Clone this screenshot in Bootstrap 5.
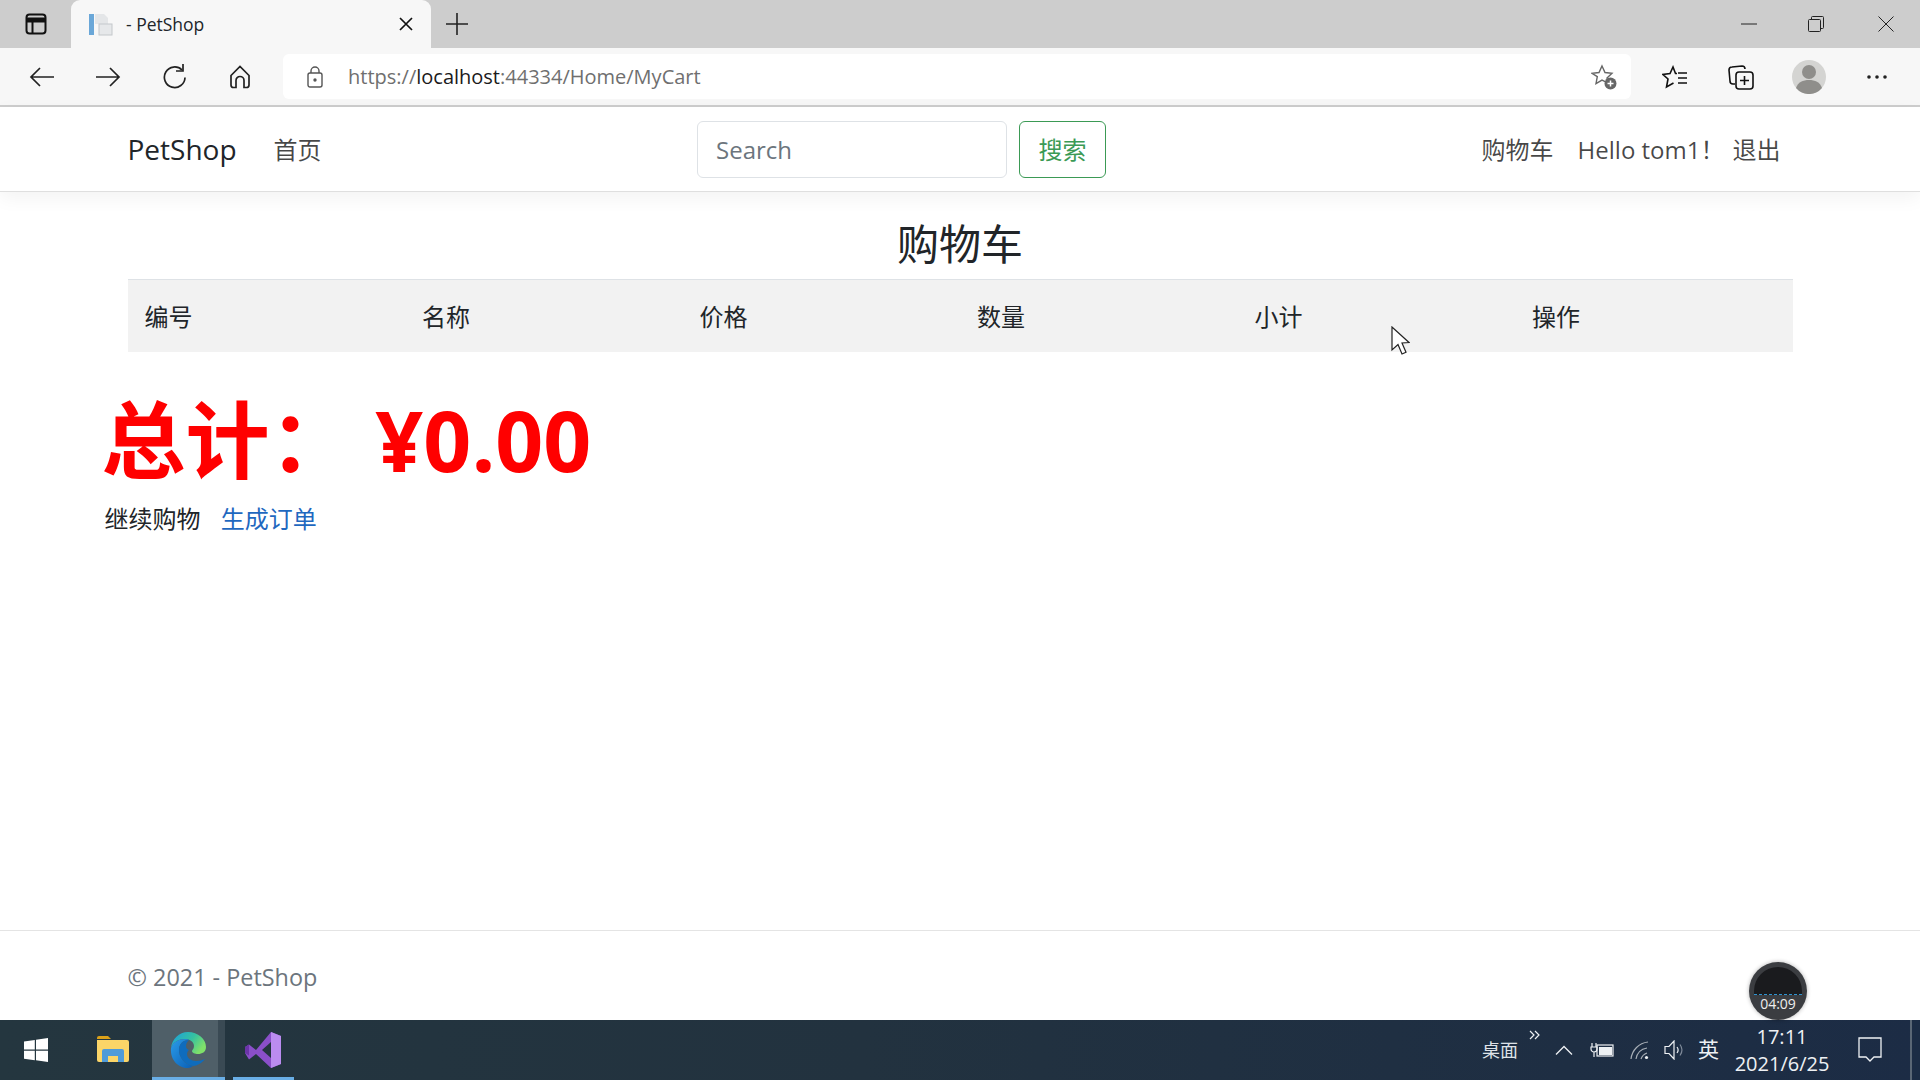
<!DOCTYPE html>
<html lang="zh-CN">
<head>
  <meta charset="UTF-8" />
  <meta name="viewport" content="width=device-width, initial-scale=1" />
  <title>PetShop</title>
  <link href="https://cdn.jsdelivr.net/npm/bootstrap@5.3.0/dist/css/bootstrap.min.css" rel="stylesheet" />
  <style>
    html, body { height: 100%; }
    body { width: 1920px; height: 1080px; overflow: hidden; position: relative; font-family: "Open Sans", "Noto Sans CJK SC", sans-serif; font-size: 24px; color: #212529; }
    svg { display: block; flex: none; }

    /* browser frame */
    .tabstrip { height: 48px; background: #cdcdcd; }
    .tab-btn { width: 71px; }
    .browser-tab { width: 360px; height: 48px; background: #f7f7f7; border-radius: 9px 9px 0 0; padding: 0 18px 0 17px; font-size: 17.5px; }
    .browser-tab span { margin-left: 13px; }
    .tab-plus { margin-left: 15px; }
    .win-btn { width: 67px; }
    .win-close { margin-left: 3px; margin-right: 1px; }
    .toolbar { height: 59px; background: #f7f7f7; border-bottom: 2px solid #cdcdcd; padding-left: 9px; }
    .tool-btn { width: 66px; }
    .addr { width: 1348px; height: 45px; background: #fff; border-radius: 6px; padding: 0 14px 0 24px; margin-left: 10px; font-size: 20px; color: #6f6f6f; }
    .addr-url { margin-left: 25px; }
    .addr-url b { font-weight: 400; color: #1b1b1b; }
    .tool-first { margin-left: 11px; }
    .tool-avatar { margin-left: 2px; }
    .tool-more { margin-left: 2px; }

    /* site */
    .wrap { width: 1665px; margin: 0 auto; }
    .site-nav { height: 85px; background: #fff; border-bottom: 1px solid #dfdfdf; box-shadow: 0 6px 18px rgba(0,0,0,.05); position: relative; }
    .brand { font-size: 28px; color: #212529; text-decoration: none; }
    .site-link { color: rgba(0,0,0,.72); text-decoration: none; position: relative; top: 1px; }
    .home-link { margin-left: 37px; }
    .hello-link { margin-right: -16px; }
    .search-box { width: 310px; height: 57px; font-size: 24px; padding: 0 18px; border-radius: 6px; }
    .search-box::placeholder { color: #6c757d; }
    .search-btn { width: 87px; height: 57px; font-size: 24px; padding: 0; margin-left: 12px; border-radius: 6px; color: #3b9a55; border-color: #3b9a55; }
    .search-form { position: absolute; left: 697px; top: 14px; }
    .right-links { gap: 24px; margin-right: 12px; }
    .page-main { flex: 1 1 auto; }
    .page-title { font-size: 42px; line-height: 71px; height: 87px; padding-top: 16px; margin: 0; font-weight: 400; }
    .cart-table { margin: 0; table-layout: fixed; }
    .cart-table th { background: #f2f2f2; border-top: 1px solid #dee2e6; border-bottom: 0; font-weight: 400; height: 72px; padding: 2px 17px 0; vertical-align: middle; font-size: 24px; }
    .total-line { font-size: 84px; font-weight: 700; color: #f00; line-height: 114px; margin: 31px 0 0 -26px; }
    .after-links { margin: 4px 0 0 -23px; line-height: 36px; }
    .after-links a { text-decoration: none; margin-right: 14px; }
    .keep-link { color: #212529; }
    .order-link { color: #1f68bf; }
    .site-foot { height: 90px; border-top: 1px solid #e4e4e4; color: #6c757d; font-size: 23.4px; padding-top: 4px; }

    /* taskbar */
    .taskbar { height: 60px; background: linear-gradient(90deg, #24363f 0%, #22323f 45%, #1c2c45 100%); color: #eef1f4; }
    .task-item { height: 60px; position: relative; }
    .task-win { width: 71px; }
    .task-folder { width: 81px; padding-left: 2px; }
    .task-edge { width: 73px; padding-right: 2px; background: linear-gradient(90deg, #4f5f68 0, #4f5f68 66px, #3a4a54 66px); }
    .task-vs { width: 61px; margin-left: 8px; padding-right: 2px; }
    .task-on { position: absolute; left: 0; right: 0; bottom: 0; height: 3px; background: #69aee6; }
    .tray { height: 60px; padding-right: 8px; }
    .tray-desk { font-size: 18px; color: #dfe3e8; }
    .tray-more { margin: -30px 0 0 11px; }
    .tray-up { margin-left: 15px; }
    .tray-batt { margin-left: 17px; }
    .tray-wifi { margin-left: 16px; }
    .tray-vol { margin-left: 14px; }
    .tray-lang { font-size: 21px; margin-left: 12px; }
    .tray-clock { width: 118px; margin-left: 4px; text-align: center; font-size: 20px; line-height: 27px; }
    .tray-note { margin-left: 17px; margin-right: 28px; }
    .tray-edge { width: 2px; height: 60px; background: #5a6675; }

    /* overlays */
    .rec-timer { position: absolute; left: 1749px; top: 962px; width: 58px; height: 58px; border-radius: 50%; background: #3b3d41; box-shadow: 0 0 4px rgba(0,0,0,.3); overflow: hidden; color: #eee; font-size: 14px; text-align: center; }
    .rec-timer-in { position: absolute; left: 5px; top: 5px; width: 48px; height: 28px; background: #1a1b1e; border-radius: 24px 24px 0 0; border-bottom: 1px dashed #2f93cf; }
    .rec-timer-txt { position: absolute; left: 0; right: 0; top: 32px; line-height: 20px; }
    .cursor { position: absolute; left: 1391px; top: 326px; }
  </style>
</head>
<body class="d-flex flex-column">

<div class="tabstrip d-flex align-items-end">
  <div class="tab-btn d-flex justify-content-center align-items-center h-100">
    <svg width="22" height="22" viewBox="0 0 22 22" fill="none" stroke="#111" stroke-width="2"><rect x="1.500" y="1.500" width="19" height="19" rx="3"/><path d="M1.500 7h19" stroke-width="5"/><path d="M7.500 7v13"/></svg>
  </div>
  <div class="browser-tab d-flex align-items-center">
    <svg width="25" height="25" viewBox="0 0 25 25"><rect x="1" y="2" width="5" height="21" fill="#6aa7d8"/><path d="M7 2h9l4 4v6H7z" fill="#e4e6e8"/><rect x="11" y="12" width="13" height="11" fill="#e6e8ea" stroke="#c4c8cb"/></svg>
    <span>- PetShop</span>
    <svg class="ms-auto" width="14" height="14" viewBox="0 0 14 14" stroke="#111" stroke-width="1.700"><path d="M1 1l12 12M13 1L1 13"/></svg>
  </div>
  <div class="tab-plus d-flex align-items-center h-100">
    <svg width="22" height="22" viewBox="0 0 22 22" stroke="#222" stroke-width="1.600"><path d="M11 0v22M0 11h22"/></svg>
  </div>
  <div class="d-flex ms-auto h-100">
    <div class="win-btn d-flex justify-content-center align-items-center"><svg width="16" height="2" viewBox="0 0 16 2" stroke="#222"><path d="M0 1h16"/></svg></div>
    <div class="win-btn d-flex justify-content-center align-items-center"><svg width="16" height="16" viewBox="0 0 16 16" fill="none" stroke="#222"><rect x=".5" y="3.500" width="12" height="12" rx="1"/><path d="M3.500 3.500V1.500a1 1 0 0 1 1-1h10a1 1 0 0 1 1 1v10a1 1 0 0 1-1 1h-2"/></svg></div>
    <div class="win-btn win-close d-flex justify-content-center align-items-center"><svg width="16" height="16" viewBox="0 0 16 16" stroke="#222"><path d="M.5.5l15 15M15.500.5l-15 15"/></svg></div>
  </div>
</div>

<div class="toolbar d-flex align-items-center">
  <div class="tool-btn d-flex justify-content-center">
    <svg width="26" height="22" viewBox="0 0 26 22" fill="none" stroke="#222" stroke-width="1.700"><path d="M25 11H2M11 2l-9 9 9 9"/></svg>
  </div>
  <div class="tool-btn d-flex justify-content-center">
    <svg width="26" height="22" viewBox="0 0 26 22" fill="none" stroke="#222" stroke-width="1.700"><path d="M1 11h23M15 2l9 9-9 9"/></svg>
  </div>
  <div class="tool-btn d-flex justify-content-center">
    <svg width="24" height="25" viewBox="0 0 24 25" fill="none" stroke="#222" stroke-width="1.700"><path d="M20 6a10.300 10.300 0 1 0 3 7.500"/><path d="M21 0v7h-7"/></svg>
  </div>
  <div class="tool-btn d-flex justify-content-center">
    <svg width="22" height="24" viewBox="0 0 22 24" fill="none" stroke="#222" stroke-width="1.700"><path d="M2 10.500 11 1.500l9 9V20a2.500 2.500 0 0 1-2.500 2.500H15v-7a4 4 0 0 0-8 0v7H4.500A2.500 2.500 0 0 1 2 20z"/></svg>
  </div>
  <div class="addr d-flex align-items-center">
    <svg width="16" height="22" viewBox="0 0 16 22" fill="none" stroke="#555" stroke-width="1.400"><rect x="1" y="7" width="14" height="14" rx="2"/><path d="M4 7V5a4 4 0 0 1 8 0v2"/><circle cx="8" cy="14" r="1" fill="#555"/></svg>
    <span class="addr-url">https://<b>localhost</b>:44334/Home/MyCart</span>
    <svg class="ms-auto" width="26" height="26" viewBox="0 0 26 26"><path d="M11 2l3 6.500 7 .8-5 4.800 1 5-6-3-6 3.500 1.300-7L1 9.300l7-.8z" fill="none" stroke="#666" stroke-width="1.400"/><circle cx="19.500" cy="19.500" r="6" fill="#666"/><path d="M19.500 16.500v6M16.500 19.500h6" stroke="#fff" stroke-width="1.500"/></svg>
  </div>
  <div class="tool-btn tool-first d-flex justify-content-center">
    <svg width="26" height="24" viewBox="0 0 26 24" fill="none" stroke="#111" stroke-width="1.600"><path d="M15 8.500h-1.500L11 2 8 8.500l-7 1 5 4.500-1.500 8 7-4"/><path d="M16 8h9M16 13h9M16 18h9"/></svg>
  </div>
  <div class="tool-btn d-flex justify-content-center">
    <svg width="26" height="26" viewBox="0 0 26 26" fill="none" stroke="#111" stroke-width="1.600"><path d="M7 20H5a3 3 0 0 1-3-3L1 6a3 3 0 0 1 3-3l10-1a3 3 0 0 1 3 3"/><rect x="8" y="8" width="17" height="17" rx="3"/><path d="M16.500 12v9M12 16.500h9"/></svg>
  </div>
  <div class="tool-btn tool-avatar d-flex justify-content-center">
    <svg width="34" height="34" viewBox="0 0 34 34"><circle cx="17" cy="17" r="17" fill="#d4d4d2"/><circle cx="17" cy="12" r="7" fill="#8f8e8b"/><path d="M4 28c2-6 7-8 13-8s11 2 13 8a17 17 0 0 1-26 0z" fill="#8f8e8b"/></svg>
  </div>
  <div class="tool-btn tool-more d-flex justify-content-center">
    <svg width="20" height="4" viewBox="0 0 20 4" fill="#222"><circle cx="2" cy="2" r="1.800"/><circle cx="10" cy="2" r="1.800"/><circle cx="18" cy="2" r="1.800"/></svg>
  </div>
</div>

<nav class="site-nav">
  <div class="wrap d-flex align-items-center h-100">
    <a class="brand" href="#">PetShop</a>
    <a class="site-link home-link" href="#">首页</a>
    <form class="search-form d-flex">
      <input class="form-control search-box" type="search" placeholder="Search" />
      <button class="btn search-btn" type="button">搜索</button>
    </form>
    <div class="right-links d-flex ms-auto">
      <a class="site-link" href="#">购物车</a>
      <span class="site-link hello-link">Hello tom1！</span>
      <a class="site-link" href="#">退出</a>
    </div>
  </div>
</nav>

<main class="page-main">
  <div class="wrap">
    <h3 class="page-title text-center">购物车</h3>
    <table class="table cart-table">
      <thead>
        <tr>
          <th>编号</th>
          <th>名称</th>
          <th>价格</th>
          <th>数量</th>
          <th>小计</th>
          <th>操作</th>
        </tr>
      </thead>
    </table>
    <div class="total-line">总计： ¥0.00</div>
    <div class="after-links">
      <a class="keep-link" href="#">继续购物</a>
      <a class="order-link" href="#">生成订单</a>
    </div>
  </div>
</main>

<footer class="site-foot d-flex align-items-center">
  <div class="wrap">© 2021 - PetShop</div>
</footer>

<div class="taskbar d-flex">
  <div class="task-item task-win d-flex justify-content-center align-items-center">
    <svg width="24" height="24" viewBox="0 0 24 24" fill="#fff"><path d="M0 3.500 10.800 2v9.500H0zM12 1.800 24 0v11.500H12zM0 12.700h10.800v9.500L0 20.700zM12 12.700h12V24l-12-1.800z"/></svg>
  </div>
  <div class="task-item task-folder d-flex justify-content-center align-items-center">
    <svg width="32" height="28" viewBox="0 0 32 28"><path d="M0 2a2 2 0 0 1 2-2h9l3 3h-14z" fill="#dba118"/><path d="M0 4h30a2 2 0 0 1 2 2v18a2 2 0 0 1-2 2H2a2 2 0 0 1-2-2z" fill="#fbd568"/><path d="M5 26V15a2 2 0 0 1 2-2h18a2 2 0 0 1 2 2v11h-6v-6H11v6z" fill="#4f9bd9"/></svg>
  </div>
  <div class="task-item task-edge d-flex justify-content-center align-items-center">
    <svg width="36" height="36" viewBox="0 0 36 36">
      <defs>
        <linearGradient id="edgeA" x1="0" y1="0" x2="1" y2="0.500"><stop offset="0" stop-color="#1b9de2"/><stop offset=".6" stop-color="#35c1a0"/><stop offset="1" stop-color="#7fe06a"/></linearGradient>
        <linearGradient id="edgeB" x1="0" y1="0" x2="1" y2="1"><stop offset="0" stop-color="#2a9be8"/><stop offset="1" stop-color="#0b5fb5"/></linearGradient>
      </defs>
      <path d="M1 16C2 7 9 0 18 0c10 0 18 7 18 15 0 5-4 7-8 7-3 0-6-1-6-3 0-1 2-2 2-5 0-4-4-7-9-7C9 7 3 10 1 16z" fill="url(#edgeA)"/>
      <path d="M1 16c2-6 8-9 14-9 2 0 3 .3 4 1-6 0-10 4-10 10 0 7 5 14 14 16-2 1-3 2-5 2C8 36 0 28 1 16z" fill="url(#edgeB)"/>
      <path d="M19 8c-6 0-10 4-10 10 0 7 5 14 14 16 4 0 9-3 12-7-3 1-5 2-9 2-5 0-9-3-9-7 0-2 1-3 2-4-2-1-3-2-3-4 0-3 2-5 3-6z" fill="#0f6cbd"/>
    </svg>
    <div class="task-on"></div>
  </div>
  <div class="task-item task-vs d-flex justify-content-center align-items-center">
    <svg width="36" height="36" viewBox="0 0 36 36"><path d="M26 0l10 4v28l-10 4-15-14-7 5.500L0 21V15l4-2.500 7 5.500zM26 10l-9 8 9 8z" fill="#8a4fc9"/><path d="M26 0l10 4v28l-10 4z" fill="#bb8cf0"/><path d="M0 15l4-2.500v11L0 21z" fill="#6a34a8"/></svg>
    <div class="task-on"></div>
  </div>
  <div class="tray d-flex align-items-center ms-auto">
    <span class="tray-desk">桌面</span>
    <svg class="tray-more" width="11" height="10" viewBox="0 0 11 10" fill="none" stroke="#eef1f4" stroke-width="1.200"><path d="M1 1l4 4-4 4M6 1l4 4-4 4"/></svg>
    <svg class="tray-up" width="18" height="10" viewBox="0 0 18 10" fill="none" stroke="#eef1f4" stroke-width="1.300"><path d="M1 9.500l8-8 8 8"/></svg>
    <svg class="tray-batt" width="24" height="16" viewBox="0 0 24 16" fill="none" stroke="#eef1f4" stroke-width="1.200"><rect x="7" y="3" width="16" height="11"/><rect x="9" y="5" width="13" height="8" fill="#eef1f4" stroke="none"/><path d="M2 1v4M6 1v4M1 5h6v2a3 3 0 0 1-6 0zM4 10v5"/></svg>
    <svg class="tray-wifi" width="20" height="20" viewBox="0 0 20 20" fill="none" stroke="#a9b0b8" stroke-width="1.200"><path d="M1 19C2 10 9 3 18 2M6 19c1-6 5-10 11-11M11 19c1-3 3-5 6-6"/><circle cx="16.500" cy="17.500" r="1.600" fill="#eef1f4" stroke="none"/></svg>
    <svg class="tray-vol" width="22" height="20" viewBox="0 0 22 20" fill="none" stroke="#eef1f4" stroke-width="1.200"><path d="M1 6.500h4L10 1v18l-5-5.500H1z"/><path d="M13 7c1.500 2 1.500 4 0 6"/><path d="M16 4.500c2.500 3.500 2.500 7.500 0 11" stroke="#7f8a99"/></svg>
    <span class="tray-lang">英</span>
    <div class="tray-clock"><div>17:11</div><div>2021/6/25</div></div>
    <svg class="tray-note" width="24" height="26" viewBox="0 0 24 26" fill="none" stroke="#eef1f4" stroke-width="1.300"><path d="M1 1h22v19h-7l-4 4-4-4H1z"/></svg>
    <div class="tray-edge"></div>
  </div>
</div>

<div class="rec-timer">
  <div class="rec-timer-in"></div>
  <div class="rec-timer-txt">04:09</div>
</div>

<svg class="cursor" width="19" height="29" viewBox="0 0 19 29"><path d="M1 1v23l6-5.500 4 9.500 4-1.800-4-9.200 7-.5z" fill="#fff" stroke="#222" stroke-width="1.200"/></svg>

<script src="https://cdn.jsdelivr.net/npm/bootstrap@5.3.0/dist/js/bootstrap.bundle.min.js"></script>
</body>
</html>
